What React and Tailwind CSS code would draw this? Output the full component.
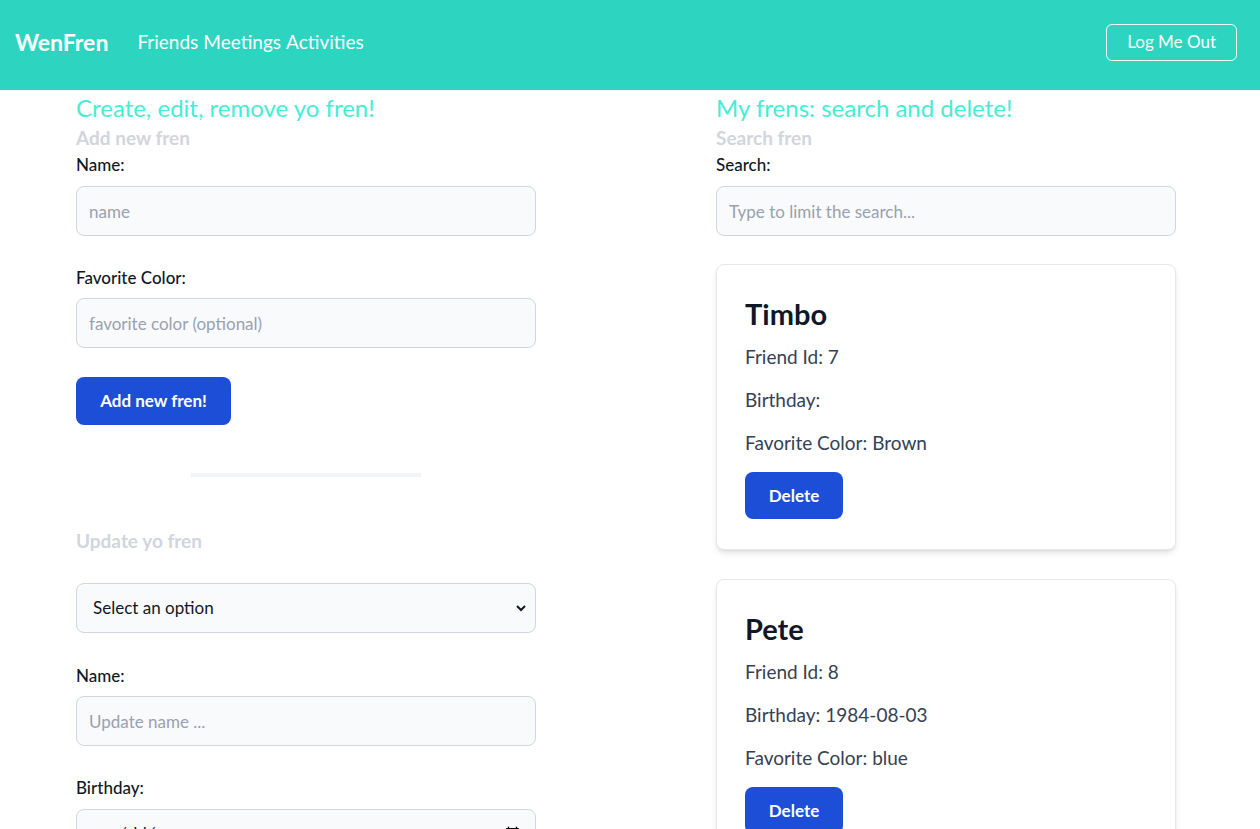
import React, { useState } from "react";

const friends = [
  { id: 7, name: "Timbo", birthday: "", color: "Brown" },
  { id: 8, name: "Pete", birthday: "1984-08-03", color: "blue" },
];

export default function App() {
  const [search, setSearch] = useState("");

  const inputClass =
    "block w-full h-[50px] rounded-lg border border-gray-300 bg-gray-50 px-3 text-[17px] text-gray-900 " +
    "placeholder:text-gray-400 focus:outline-none";
  const labelClass = "block text-[17px] font-medium text-gray-900 leading-6";
  const subClass = "text-[19px] font-bold text-gray-300 leading-7";
  const titleClass = "text-[24px] text-teal-300 leading-8";

  return (
    <div className="min-h-screen bg-white" style={{ fontFamily: "Lato, 'Noto Sans', sans-serif" }}>
      {/* ================= NAV ================= */}
      <nav className="h-[90px] bg-[#2dd4bf] flex items-center px-[15px] pb-[6px]">
        <span className="text-[23px] font-bold text-white">WenFren</span>
        <div className="ml-[29px] flex gap-[5px] text-[19px] text-white">
          <a>Friends</a>
          <a>Meetings</a>
          <a>Activities</a>
        </div>
        <button className="ml-auto mr-[8px] h-[37px] px-[20px] rounded-md border border-teal-50 text-[17px] text-white">
          Log Me Out
        </button>
      </nav>

      {/* ================= CONTENT ================= */}
      <div className="flex gap-[180px] pl-[76px]">
        {/* LEFT */}
        <div className="w-[460px]">
          <h2 className={titleClass + " mt-[2px]"}>Create, edit, remove yo fren!</h2>
          <h3 className={subClass}>Add new fren</h3>
          <label className={labelClass + " mt-[1px]"}>Name:</label>
          <input className={inputClass + " mt-[9px]"} placeholder="name" />
          <label className={labelClass + " mt-[30px]"}>Favorite Color:</label>
          <input className={inputClass + " mt-[8px]"} placeholder="favorite color (optional)" />
          <button className="mt-[29px] h-[48px] w-[155px] rounded-lg bg-[#1d4ed8] text-[17px] font-bold text-white">
            Add new fren!
          </button>
          <div className="mx-auto mt-[48px] h-[4px] w-[230px] bg-gray-100" />
          <h3 className={subClass + " mt-[50px]"}>Update yo fren</h3>
          <div className="relative mt-[28px]">
            <select className={inputClass + " appearance-none pl-4"} defaultValue="">
              <option value="">Select an option</option>
              {friends.map((f) => (
                <option key={f.id} value={f.id}>
                  {f.name}
                </option>
              ))}
            </select>
            <svg
              className="pointer-events-none absolute right-[9px] top-[19px]"
              width="12"
              height="12"
              viewBox="0 0 12 12"
              fill="none"
              stroke="#111827"
              strokeWidth="2"
            >
              <path d="M2 4l4 4 4-4" />
            </svg>
          </div>
          <label className={labelClass + " mt-[31px]"}>Name:</label>
          <input className={inputClass + " mt-[8px]"} placeholder="Update name ..." />
          <label className={labelClass + " mt-[30px]"}>Birthday:</label>
          <input type="date" className={inputClass + " mt-[9px]"} />
        </div>

        {/* RIGHT */}
        <div className="w-[460px]">
          <h2 className={titleClass + " mt-[2px]"}>My frens: search and delete!</h2>
          <h3 className={subClass}>Search fren</h3>
          <label className={labelClass + " mt-[1px]"}>Search:</label>
          <input
            className={inputClass + " mt-[9px]"}
            placeholder="Type to limit the search..."
            value={search}
            onChange={(e) => setSearch(e.target.value)}
          />

          <div className="mt-[28px] space-y-[29px]">
            {friends
              .filter((f) => f.name.toLowerCase().includes(search.toLowerCase()))
              .map((f) => (
                <div
                  key={f.id}
                  className="rounded-lg border border-gray-200 bg-white px-[28px] pt-[31px] pb-[30px] shadow-md"
                >
                  <h4 className="text-[29px] font-bold leading-9 text-gray-900">{f.name}</h4>
                  <p className="mt-[11px] text-[19px] leading-7 text-gray-700">Friend Id: {f.id}</p>
                  <p className="mt-[15px] text-[19px] leading-7 text-gray-700">Birthday: {f.birthday}</p>
                  <p className="mt-[15px] text-[19px] leading-7 text-gray-700">Favorite Color: {f.color}</p>
                  <button className="mt-[15px] h-[47px] w-[98px] rounded-lg bg-[#1d4ed8] text-[17px] font-bold text-white">
                    Delete
                  </button>
                </div>
              ))}
          </div>
        </div>
      </div>
    </div>
  );
}
